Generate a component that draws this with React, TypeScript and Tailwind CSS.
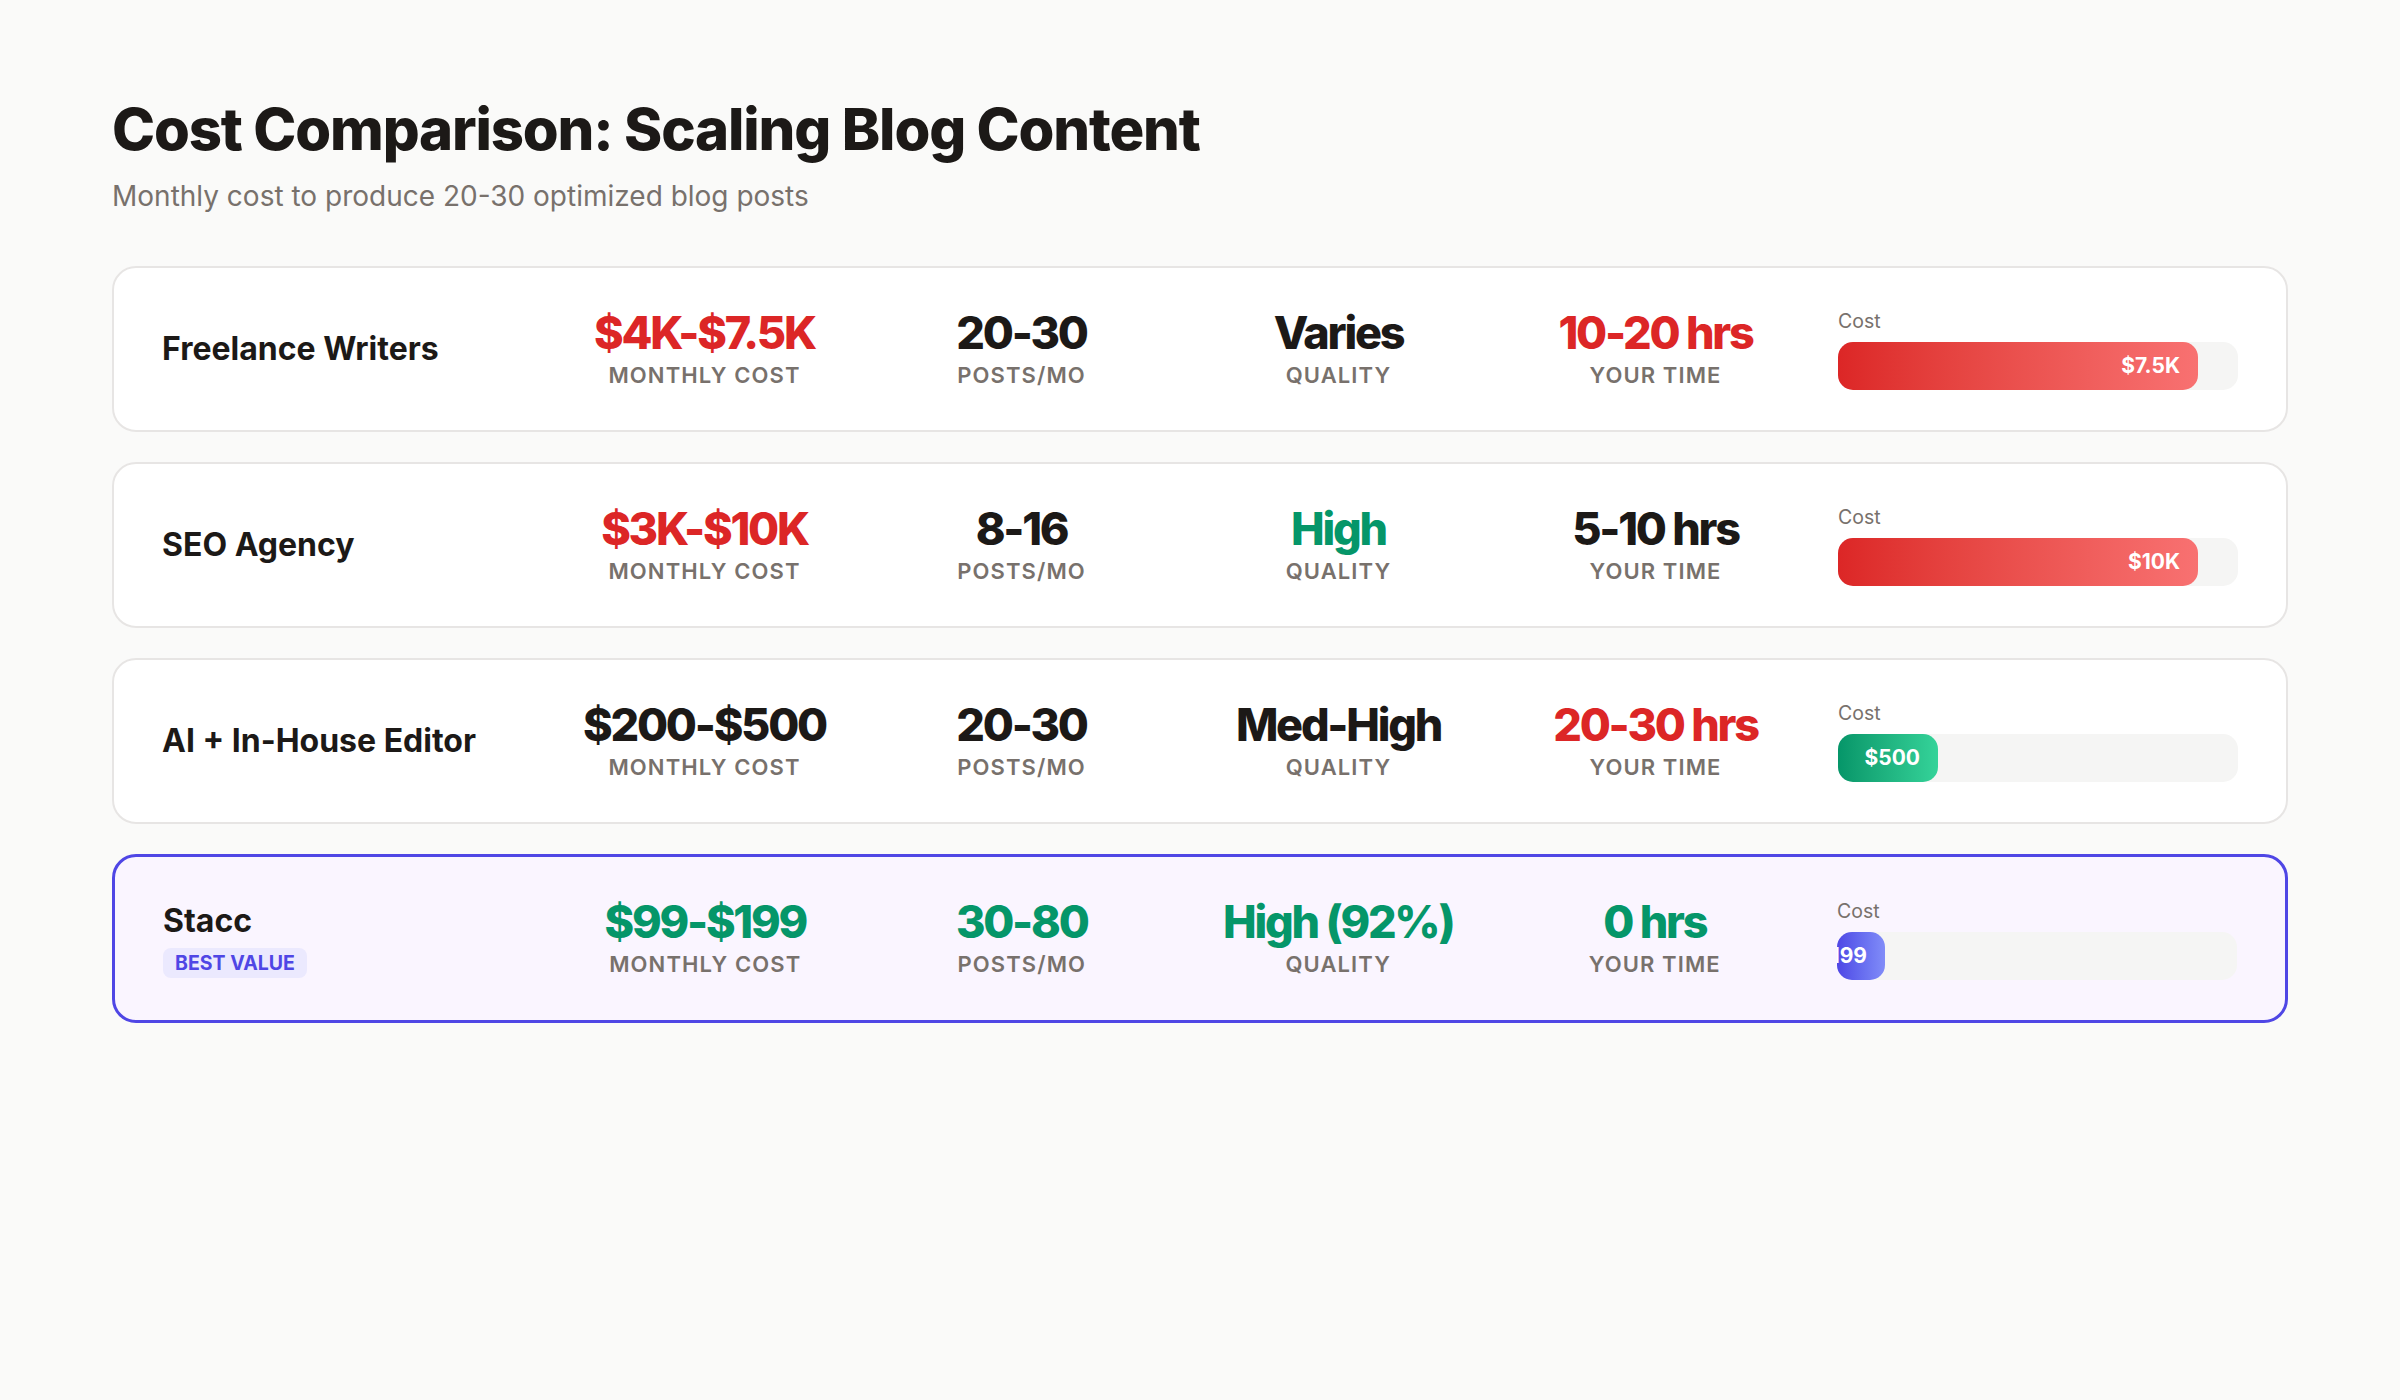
import React from 'react';

type Row = {
  name: string;
  cost: string;
  costColor: string;
  posts: string;
  postsColor: string;
  quality: string;
  qualityColor: string;
  time: string;
  timeColor: string;
  bar: string;
  pct: number;
  fill: string;
  highlight?: boolean;
};

const RED = 'text-[#dc2626]';
const DARK = 'text-[#1c1917]';
const GREEN = 'text-[#059669]';

const rows: Row[] = [
  {
    name: 'Freelance Writers',
    cost: '$4K-$7.5K',
    costColor: RED,
    posts: '20-30',
    postsColor: DARK,
    quality: 'Varies',
    qualityColor: DARK,
    time: '10-20 hrs',
    timeColor: RED,
    bar: '$7.5K',
    pct: 90,
    fill: 'bg-linear-to-r from-[#dc2626] to-[#f87171]'
  },
  {
    name: 'SEO Agency',
    cost: '$3K-$10K',
    costColor: RED,
    posts: '8-16',
    postsColor: DARK,
    quality: 'High',
    qualityColor: GREEN,
    time: '5-10 hrs',
    timeColor: DARK,
    bar: '$10K',
    pct: 90,
    fill: 'bg-linear-to-r from-[#dc2626] to-[#f87171]'
  },
  {
    name: 'AI + In-House Editor',
    cost: '$200-$500',
    costColor: DARK,
    posts: '20-30',
    postsColor: DARK,
    quality: 'Med-High',
    qualityColor: DARK,
    time: '20-30 hrs',
    timeColor: RED,
    bar: '$500',
    pct: 25,
    fill: 'bg-linear-to-r from-[#059669] to-[#34d399]'
  },
  {
    name: 'Stacc',
    cost: '$99-$199',
    costColor: GREEN,
    posts: '30-80',
    postsColor: GREEN,
    quality: 'High (92%)',
    qualityColor: GREEN,
    time: '0 hrs',
    timeColor: GREEN,
    bar: '$199',
    pct: 12,
    fill: 'bg-linear-to-r from-[#4f46e5] to-[#818cf8]',
    highlight: true
  }
];

function Metric({ value, label, color }: { value: string; label: string; color: string }) {
  return (
    <div className="flex flex-col items-center text-center">
      <div className={`text-[45px] font-extrabold leading-[1.2] tracking-[-0.05em] ${color}`}>{value}</div>
      <div className="text-[22px] font-semibold uppercase leading-[31.5px] tracking-[0.05em] text-[#78716c]">
        {label}
      </div>
    </div>
  );
}

function CompareRow({ row }: { row: Row }) {
  return (
    <div
      className={
        row.highlight
          ? 'grid h-[169px] grid-cols-[360px_repeat(4,1fr)_400px] items-center gap-12 rounded-[24px] border-[3px] border-[#4f46e5] bg-[#faf5ff] px-12'
          : 'grid h-[166px] grid-cols-[360px_repeat(4,1fr)_400px] items-center gap-12 rounded-[24px] border-2 border-[#e7e5e4] bg-white px-12'
      }
    >
      <div>
        <div className="text-[32px] font-bold leading-[45px] text-[#1c1917]">{row.name}</div>
        {row.highlight && (
          <span className="mt-[5px] inline-block rounded-[8px] bg-[#ebe9fe] px-[12px] py-[4px] text-[19.5px] font-bold leading-[22px] text-[#4f46e5]">
            BEST VALUE
          </span>
        )}
      </div>
      <Metric value={row.cost} label="Monthly Cost" color={row.costColor} />
      <Metric value={row.posts} label="Posts/Mo" color={row.postsColor} />
      <Metric value={row.quality} label="Quality" color={row.qualityColor} />
      <Metric value={row.time} label="Your Time" color={row.timeColor} />
      <div>
        <div className="mb-[6px] text-[19.5px] leading-[29px] text-[#78716c]">Cost</div>
        <div className="h-[48px] w-full rounded-[15px] bg-[#f5f5f4]">
          <div
            className={`flex h-full items-center justify-end overflow-hidden whitespace-nowrap rounded-[15px] pr-[18px] text-[21px] font-bold text-white ${row.fill}`}
            style={{ width: `${row.pct}%` }}
          >
            {row.bar}
          </div>
        </div>
      </div>
    </div>
  );
}

export default function App() {
  return (
    <div className="min-h-[1400px] bg-[#fafaf9] px-[112px] pt-[95px] font-['Inter',sans-serif] text-[#1c1917]">
      <h1 className="text-[58px] font-extrabold leading-[1.2] tracking-[-0.02em] text-[#1c1917]">
        Cost Comparison: Scaling Blog Content
      </h1>
      <p className="mt-[10px] text-[28px] leading-[42px] text-[#78716c]">
        Monthly cost to produce 20-30 optimized blog posts
      </p>
      <div className="mt-[49px] flex flex-col gap-[30px]">
        {rows.map(row => (
          <CompareRow key={row.name} row={row} />
        ))}
      </div>
    </div>
  );
}
